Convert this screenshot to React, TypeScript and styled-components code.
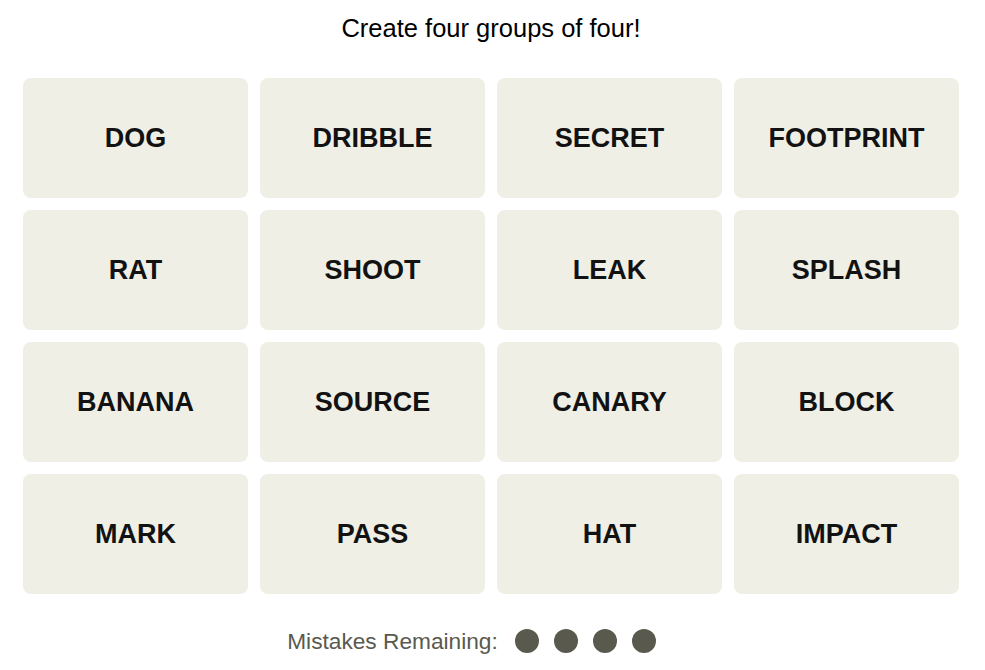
import React from 'react';
import styled, { createGlobalStyle } from 'styled-components';

const WORDS = [
  'DOG', 'DRIBBLE', 'SECRET', 'FOOTPRINT',
  'RAT', 'SHOOT', 'LEAK', 'SPLASH',
  'BANANA', 'SOURCE', 'CANARY', 'BLOCK',
  'MARK', 'PASS', 'HAT', 'IMPACT',
];

const GlobalStyle = createGlobalStyle`
  body {
    margin: 0;
    background: #ffffff;
    font-family: "Liberation Sans", Arial, sans-serif;
  }
`;

function App() {
  return (
    <Container>
      <GlobalStyle />
      <Title>Create four groups of four!</Title>
      <Board>
        {WORDS.map((word) => (
          <Tile key={word}>{word}</Tile>
        ))}
      </Board>
      <Mistakes>
        <MistakesLabel>Mistakes Remaining:</MistakesLabel>
        <Dots>
          {[0, 1, 2, 3].map((i) => (
            <Dot key={i} />
          ))}
        </Dots>
      </Mistakes>
    </Container>
  );
}

export default App;

const Container = styled.main`
  width: 982px;
  display: flex;
  flex-direction: column;
  align-items: center;
  padding-top: 14px;
`;

const Title = styled.h1`
  margin: 0;
  font-size: 25.5px;
  line-height: 28px;
  font-weight: 400;
  color: #000000;
`;

const Board = styled.div`
  margin-top: 36px;
  display: grid;
  grid-template-columns: repeat(4, 225px);
  grid-auto-rows: 120px;
  gap: 12px;
`;

const Tile = styled.div`
  display: flex;
  align-items: center;
  justify-content: center;
  background: #efefe6;
  border-radius: 8px;
  font-size: 27px;
  font-weight: 700;
  color: #121212;
`;

const Mistakes = styled.div`
  margin-top: 32px;
  padding-right: 39px;
  display: flex;
  align-items: center;
  gap: 17px;
  height: 30px;
`;

const MistakesLabel = styled.span`
  font-size: 22.7px;
  color: #5a594e;
`;

const Dots = styled.div`
  display: flex;
  gap: 15px;
`;

const Dot = styled.span`
  width: 24px;
  height: 24px;
  border-radius: 50%;
  background: #5a594e;
`;
